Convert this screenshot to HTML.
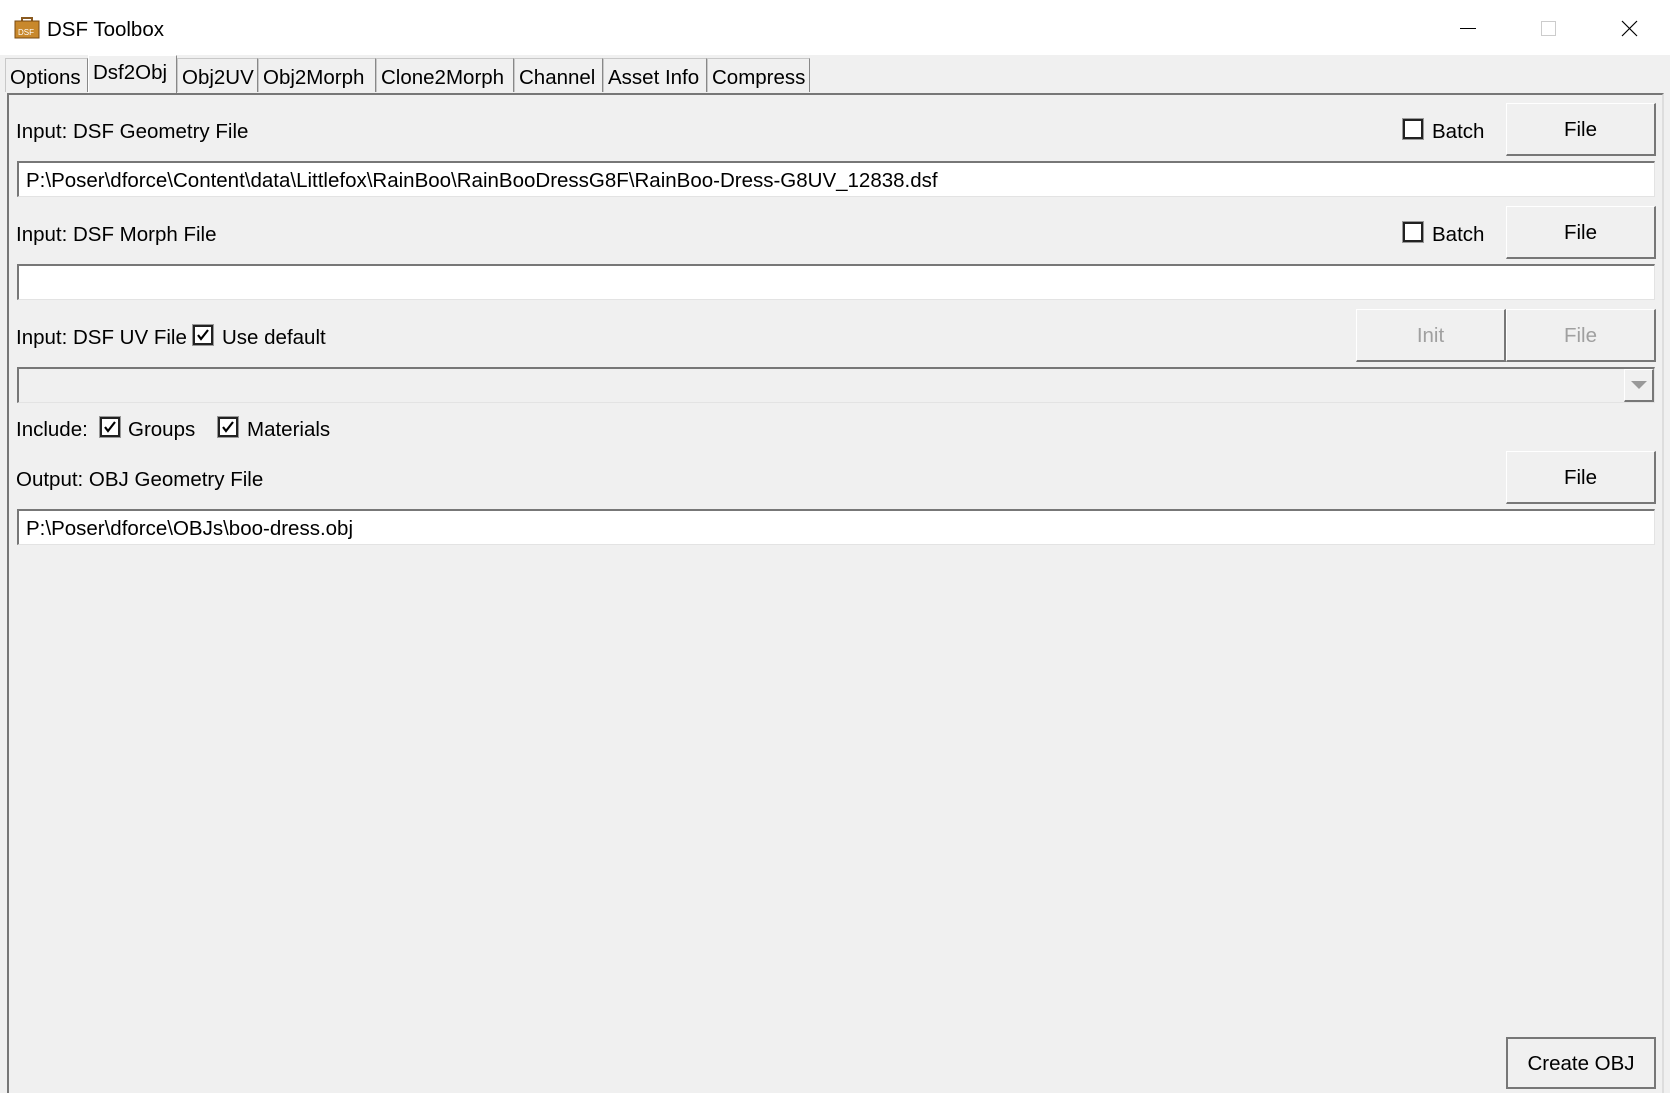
<!DOCTYPE html>
<html><head><meta charset="utf-8"><style>
*{box-sizing:border-box;margin:0;padding:0}
body{width:1670px;height:1091px;background:#f0f0f0;font-family:"Liberation Sans",sans-serif;font-size:20.5px;color:#000;position:relative;overflow:hidden}
.a{position:absolute;white-space:nowrap}
.title{left:0;top:0;width:1670px;height:55px;background:#fff}
.tab{position:absolute;top:58px;height:34px;border:1px solid #c8c8c8;border-right:1px solid #888;border-bottom:none;background:#f0f0f0;padding:5px 4px 0 4px;font-size:20.5px;line-height:28px;white-space:nowrap;overflow:hidden}
.sel{top:55px;height:38px;border-top:1px solid #fff;border-left:1px solid #fff;z-index:2;padding-top:3px}
.panel{left:7px;top:93px;width:1657px;height:1000px;border-top:2px solid #777;border-left:2px solid #777;border-right:2px solid #ddd}
.btn{position:absolute;background:#f0f0f0;border:1px solid #fff;border-right:2px solid #777;border-bottom:2px solid #777;text-align:center;font-size:20.5px}
.field{position:absolute;left:17px;width:1638px;height:36px;background:#fff;border-top:2px solid #777;border-left:2px solid #777;border-right:1px solid #e3e3e3;border-bottom:1px solid #e3e3e3;padding-left:7px;line-height:35px;font-size:20.5px}
.cb{position:absolute;width:20px;height:20px;background:#fff;border:2px solid #222;outline:1px solid #999}
.dis{color:#a0a0a0}
</style></head><body>
<div class="a title"></div>
<svg class="a" style="left:14px;top:15px" width="26" height="24" viewBox="0 0 26 24"><path d="M7 2h12v4h-2V4H9v2H7z" fill="#8a5a20"/><rect x="1" y="6" width="24" height="17" fill="#c8882c" stroke="#7a4a10"/><text x="4" y="20" font-size="8" fill="#fff" font-family="Liberation Sans">DSF</text></svg>
<div class="a" style="left:47px;top:18px;font-size:20.5px">DSF Toolbox</div>
<div class="a" style="left:1460px;top:28px;width:16px;height:1px;background:#000"></div>
<div class="a" style="left:1541px;top:21px;width:15px;height:15px;border:1px solid #ccc"></div>
<svg class="a" style="left:1621px;top:20px" width="17" height="17"><path d="M1 1L16 16M16 1L1 16" stroke="#000" stroke-width="1.2"/></svg>

<div class="a panel"></div>
<div class="tab" style="left:5px;width:83px">Options</div>
<div class="tab sel" style="left:88px;width:89px">Dsf2Obj</div>
<div class="tab" style="left:177px;width:81px">Obj2UV</div>
<div class="tab" style="left:258px;width:118px">Obj2Morph</div>
<div class="tab" style="left:376px;width:138px">Clone2Morph</div>
<div class="tab" style="left:514px;width:89px">Channel</div>
<div class="tab" style="left:603px;width:104px">Asset Info</div>
<div class="tab" style="left:707px;width:103px">Compress</div>

<div class="a" style="left:16px;top:120px">Input: DSF Geometry File</div>
<div class="cb" style="left:1403px;top:119px"></div><div class="a" style="left:1432px;top:120px">Batch</div>
<div class="btn" style="left:1506px;top:103px;width:150px;height:53px;line-height:52px">File</div>
<div class="field" style="top:161px">P:\Poser\dforce\Content\data\Littlefox\RainBoo\RainBooDressG8F\RainBoo-Dress-G8UV_12838.dsf</div>

<div class="a" style="left:16px;top:223px">Input: DSF Morph File</div>
<div class="cb" style="left:1403px;top:222px"></div><div class="a" style="left:1432px;top:223px">Batch</div>
<div class="btn" style="left:1506px;top:206px;width:150px;height:53px;line-height:52px">File</div>
<div class="field" style="top:264px"></div>

<div class="a" style="left:16px;top:326px">Input: DSF UV File</div>
<div class="cb" style="left:193px;top:325px"></div><svg class="a" style="left:196px;top:328px" width="14" height="14"><path d="M2 7l3 4 7-9" stroke="#000" stroke-width="2.2" fill="none"/></svg>
<div class="a" style="left:222px;top:326px">Use default</div>
<div class="btn dis" style="left:1356px;top:309px;width:150px;height:53px;line-height:52px">Init</div>
<div class="btn dis" style="left:1506px;top:309px;width:150px;height:53px;line-height:52px">File</div>
<div class="field" style="top:367px;background:#f0f0f0"></div>
<div class="a" style="left:1624px;top:369px;width:30px;height:33px;border:1px solid #fff;border-right:2px solid #777;border-bottom:2px solid #777"></div>
<svg class="a" style="left:1631px;top:381px" width="16" height="9"><path d="M0 0h16L8 8z" fill="#999"/></svg>

<div class="a" style="left:16px;top:418px">Include:</div>
<div class="cb" style="left:100px;top:417px"></div><svg class="a" style="left:103px;top:420px" width="14" height="14"><path d="M2 7l3 4 7-9" stroke="#000" stroke-width="2.2" fill="none"/></svg>
<div class="a" style="left:128px;top:418px">Groups</div>
<div class="cb" style="left:218px;top:417px"></div><svg class="a" style="left:221px;top:420px" width="14" height="14"><path d="M2 7l3 4 7-9" stroke="#000" stroke-width="2.2" fill="none"/></svg>
<div class="a" style="left:247px;top:418px">Materials</div>

<div class="a" style="left:16px;top:468px">Output: OBJ Geometry File</div>
<div class="btn" style="left:1506px;top:451px;width:150px;height:53px;line-height:52px">File</div>
<div class="field" style="top:509px">P:\Poser\dforce\OBJs\boo-dress.obj</div>

<div class="btn" style="left:1506px;top:1037px;width:150px;height:52px;line-height:50px;border:2px solid #777">Create OBJ</div>
</body></html>
